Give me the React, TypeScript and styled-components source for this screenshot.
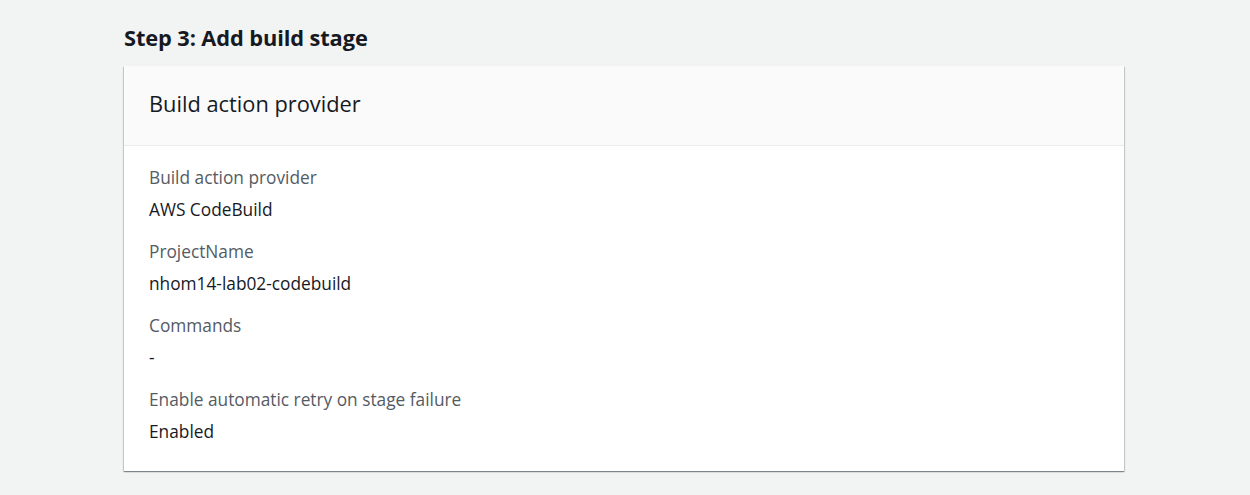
import React from "react";
import styled, { createGlobalStyle } from "styled-components";

const GlobalStyle = createGlobalStyle`
    html, body {
        margin: 0;
        padding: 0;
        background: #f2f3f3;
        font-family: "Open Sans", "Noto Sans", sans-serif;
        color: #16191f;
    }
`;

const Page = styled.div`
    width: 1000px;
    margin-left: 124px;
    padding-top: 23px;
    padding-bottom: 24px;
`;

const StepTitle = styled.h2`
    margin: 0 0 14px 0;
    font-size: 21.8px;
    line-height: 29px;
    font-weight: 700;
    letter-spacing: -0.1px;
    color: #16191f;
`;

const Card = styled.div`
    background: #ffffff;
    box-shadow: 0 1px 1px 0 rgba(0, 28, 36, 0.3),
        1px 1px 1px 0 rgba(0, 28, 36, 0.15),
        -1px 1px 1px 0 rgba(0, 28, 36, 0.15);
`;

const CardHeader = styled.div`
    background: #fafafa;
    border-bottom: 1px solid #eaeded;
    padding: 22px 25px 26px;
    height: 31px;
    display: flex;
    align-items: center;
`;

const CardTitle = styled.h3`
    margin: 0;
    font-size: 21.8px;
    font-weight: 400;
    line-height: 28px;
`;

const CardBody = styled.div`
    padding: 16px 25px 23px;
    display: flex;
    flex-direction: column;
    gap: 10px;
`;

const Field = styled.div`
    display: flex;
    flex-direction: column;
`;

const Label = styled.div`
    font-size: 17.3px;
    line-height: 32px;
    color: #545b64;
`;

const Value = styled.div`
    font-size: 17.3px;
    line-height: 32px;
    color: #16191f;
`;

const fields = [
    { label: "Build action provider", value: "AWS CodeBuild" },
    { label: "ProjectName", value: "nhom14-lab02-codebuild" },
    { label: "Commands", value: "-" },
    { label: "Enable automatic retry on stage failure", value: "Enabled" },
];

export default function App() {
    return (
        <>
            <GlobalStyle />
            <Page>
                <StepTitle>Step 3: Add build stage</StepTitle>
                <Card>
                    <CardHeader>
                        <CardTitle>Build action provider</CardTitle>
                    </CardHeader>
                    <CardBody>
                        {fields.map((f) => (
                            <Field key={f.label}>
                                <Label>{f.label}</Label>
                                <Value>{f.value}</Value>
                            </Field>
                        ))}
                    </CardBody>
                </Card>
            </Page>
        </>
    );
}
